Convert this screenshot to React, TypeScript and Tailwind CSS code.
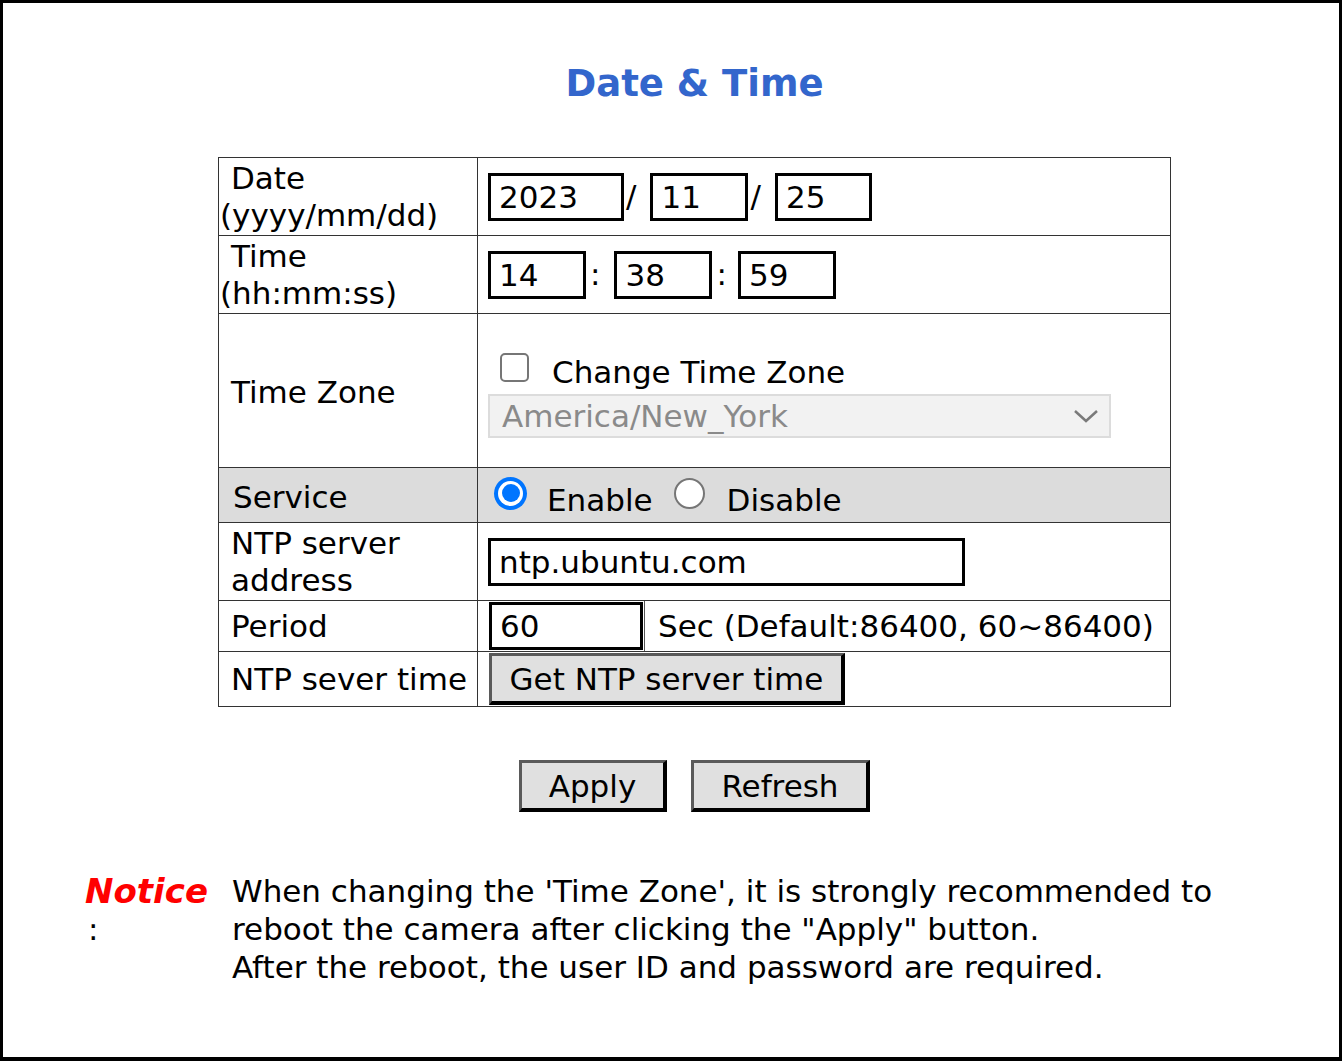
import React from "react";

function Radio({ checked }: { checked: boolean }) {
  if (checked) {
    return (
      <span className="flex h-[33px] w-[33px] items-center justify-center rounded-full bg-[#0075ff]">
        <span className="flex h-[25px] w-[25px] items-center justify-center rounded-full bg-white">
          <span className="h-[18px] w-[18px] rounded-full bg-[#0075ff]" />
        </span>
      </span>
    );
  }
  return <span className="block h-[31px] w-[31px] rounded-full border-2 border-[#767676] bg-white" />;
}

function Btn({ children, w }: { children: React.ReactNode; w: string }) {
  return (
    <button
      className={`${w} h-[52px] bg-[#e0e0e0] border-t-[3px] border-l-[3px] border-r-[4px] border-b-[4px] border-t-[#5a5a5a] border-l-[#5a5a5a] border-r-black border-b-black text-center text-[31px] leading-[40px] text-black`}
    >
      {children}
    </button>
  );
}

export default function App() {
  const cell = "border border-[#333]";
  const inp =
    "h-[48px] border-[3px] border-black bg-white px-[8px] text-[31px] leading-[40px] text-black outline-none";
  return (
    <div className="h-[1061px] w-[1342px] border-[3px] border-b-[4px] border-black bg-white font-['DejaVu_Sans',Verdana,sans-serif] text-[31px] text-black">
      <div className="ml-[215px] w-[953px]">
        <h1 className="h-[154px] pt-[59px] text-center text-[37px] font-bold leading-[44px] text-[#3366cc]">
          Date &amp; Time
        </h1>
        <table className="w-[953px] table-fixed border-collapse">
          <colgroup>
            <col className="w-[259px]" />
            <col />
          </colgroup>
          <tbody>
            <tr>
              <td className={`${cell} h-[78px] pl-[1px] leading-[37px]`}>
                <div className="pl-[11px]">Date</div>
                <div>(yyyy/mm/dd)</div>
              </td>
              <td className={`${cell} pl-[10px]`}>
                <div className="flex items-center">
                  <input readOnly defaultValue="2023" className={`${inp} w-[136px]`} />
                  <span className="ml-[2px] mr-[14px]">/</span>
                  <input readOnly defaultValue="11" className={`${inp} w-[98px]`} />
                  <span className="ml-[2px] mr-[14px]">/</span>
                  <input readOnly defaultValue="25" className={`${inp} w-[97px]`} />
                </div>
              </td>
            </tr>
            <tr>
              <td className={`${cell} h-[78px] pl-[1px] leading-[37px]`}>
                <div className="pl-[11px]">Time</div>
                <div>(hh:mm:ss)</div>
              </td>
              <td className={`${cell} pl-[10px]`}>
                <div className="flex items-center">
                  <input readOnly defaultValue="14" className={`${inp} w-[98px]`} />
                  <span className="ml-[4px] mr-[14px]">:</span>
                  <input readOnly defaultValue="38" className={`${inp} w-[98px]`} />
                  <span className="ml-[4px] mr-[11px]">:</span>
                  <input readOnly defaultValue="59" className={`${inp} w-[98px]`} />
                </div>
              </td>
            </tr>
            <tr>
              <td className={`${cell} h-[154px] pl-[12px] pt-[3px]`}>Time Zone</td>
              <td className={`${cell} pl-[10px] align-top pt-[38px]`}>
                <div className="flex h-[40px] items-center">
                  <span className="ml-[12px] mb-[10px] h-[29px] w-[29px] rounded-[5px] border-2 border-[#767676] bg-white" />
                  <span className="ml-[23px]">Change Time Zone</span>
                </div>
                <div className="mt-[2px] flex h-[44px] w-[623px] items-center justify-between border-2 border-[#dcdcdc] bg-[#f2f2f2] pl-[12px] pr-[10px] text-[#8a8a8a]">
                  <span>America/New_York</span>
                  <svg width="26" height="16" viewBox="0 0 26 16" fill="none">
                    <path d="M2 3 L13 13 L24 3" stroke="#7a7a7a" strokeWidth="2.5" />
                  </svg>
                </div>
              </td>
            </tr>
            <tr className="bg-[#dcdcdc]">
              <td className={`${cell} h-[55px] pl-[14px] pt-[4px]`}>Service</td>
              <td className={`${cell}`}>
                <div className="flex h-[54px] items-center">
                  <span className="ml-[16px] mb-[4px]">
                    <Radio checked />
                  </span>
                  <span className="ml-[20px] mt-[10px]">Enable</span>
                  <span className="ml-[21px] mb-[4px]">
                    <Radio checked={false} />
                  </span>
                  <span className="ml-[22px] mt-[10px]">Disable</span>
                </div>
              </td>
            </tr>
            <tr>
              <td className={`${cell} h-[78px] pl-[12px] leading-[37px]`}>
                <div>NTP server</div>
                <div>address</div>
              </td>
              <td className={`${cell} pl-[10px]`}>
                <input readOnly defaultValue="ntp.ubuntu.com" className={`${inp} block w-[477px]`} />
              </td>
            </tr>
            <tr>
              <td className={`${cell} h-[51px] pl-[12px]`}>Period</td>
              <td className={`${cell} p-0`}>
                <div className="flex h-[50px] items-stretch">
                  <div className="flex w-[166px] items-center pl-[11px]">
                    <input readOnly defaultValue="60" className={`${inp} h-[46px] w-[154px]`} />
                  </div>
                  <div className="flex items-center border-l border-[#555] pl-[13px]">
                    Sec (Default:86400, 60~86400)
                  </div>
                </div>
              </td>
            </tr>
            <tr>
              <td className={`${cell} h-[55px] pl-[12px]`}>NTP sever time</td>
              <td className={`${cell} pl-[11px]`}>
                <Btn w="w-[356px]">Get NTP server time</Btn>
              </td>
            </tr>
          </tbody>
        </table>
        <div className="mt-[53px] flex justify-center gap-[24px]">
          <Btn w="w-[148px]">Apply</Btn>
          <Btn w="w-[179px]">Refresh</Btn>
        </div>
      </div>
      <div className="mt-[60px] flex">
        <div className="ml-[82px] w-[147px] leading-[38px]">
          <div className="text-[34px] font-bold italic text-[#ff0000]">Notice</div>
          <div className="pl-[3px]">:</div>
        </div>
        <div className="whitespace-nowrap leading-[38px]">
          When changing the 'Time Zone', it is strongly recommended to
          <br />
          reboot the camera after clicking the "Apply" button.
          <br />
          After the reboot, the user ID and password are required.
        </div>
      </div>
    </div>
  );
}
